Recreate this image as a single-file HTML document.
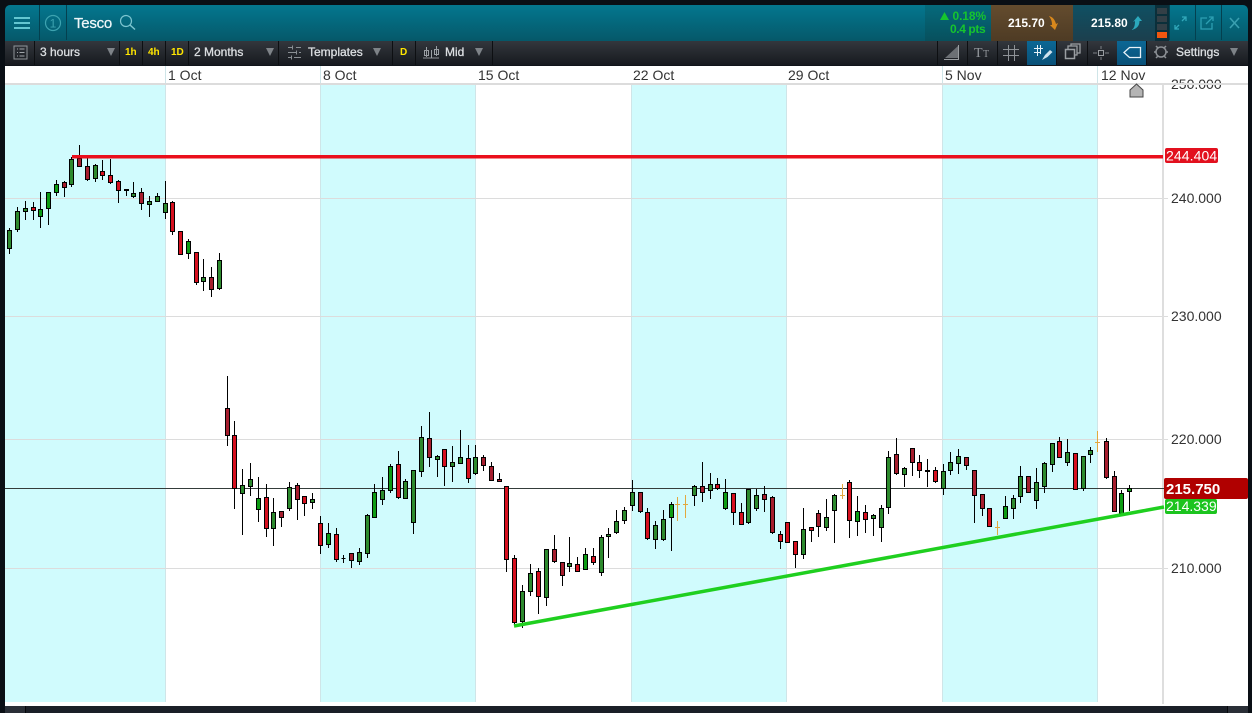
<!DOCTYPE html>
<html><head><meta charset="utf-8"><title>Tesco</title>
<style>
html,body{margin:0;padding:0;background:#0a0f15;width:1252px;height:713px;overflow:hidden}
svg{display:block;position:absolute;left:0;top:0}
text{font-family:"Liberation Sans",sans-serif}
</style></head><body>
<svg width="1252" height="713" viewBox="0 0 1252 713" xmlns="http://www.w3.org/2000/svg">
<defs>
<linearGradient id="hd" x1="0" y1="0" x2="0" y2="1"><stop offset="0" stop-color="#04778f"/><stop offset="1" stop-color="#055869"/></linearGradient>
<linearGradient id="tb" x1="0" y1="0" x2="0" y2="1"><stop offset="0" stop-color="#33373d"/><stop offset="1" stop-color="#16191e"/></linearGradient>
<linearGradient id="br" x1="0" y1="0" x2="0" y2="1"><stop offset="0" stop-color="#644c2e"/><stop offset="1" stop-color="#4e3b24"/></linearGradient>
<linearGradient id="dt" x1="0" y1="0" x2="0" y2="1"><stop offset="0" stop-color="#0f5063"/><stop offset="1" stop-color="#1c3f4d"/></linearGradient>
<linearGradient id="gc" x1="0" y1="0" x2="0" y2="1"><stop offset="0" stop-color="#056a7c"/><stop offset="1" stop-color="#07505d"/></linearGradient>
<linearGradient id="bl" x1="0" y1="0" x2="0" y2="1"><stop offset="0" stop-color="#0b6795"/><stop offset="1" stop-color="#0a5178"/></linearGradient>
</defs>
<rect width="1252" height="713" fill="#0a0f15"/>

<!-- header -->
<path d="M5 41V10a5 5 0 0 1 5-5H1243a5 5 0 0 1 5 5V41z" fill="url(#hd)"/>
<path d="M39.500 5V40M66.500 5V40" stroke="#04404f"/>
<path d="M14 18h16M14 23h16M14 28h16" stroke="#63c6d1" stroke-width="2"/>
<circle cx="53" cy="23" r="7.500" fill="none" stroke="#3da3b0" stroke-width="1.200"/>
<text x="53" y="27.500" font-size="12" fill="#3da3b0" text-anchor="middle">1</text>
<text x="74" y="28" font-size="15" fill="#eef6f8" stroke="#eef6f8" stroke-width=".25" letter-spacing="-.25">Tesco</text>
<circle cx="126" cy="21" r="5.500" fill="none" stroke="#7cc5d0" stroke-width="1.200"/>
<path d="M130 25l5 4.500" stroke="#7cc5d0" stroke-width="1.500"/>

<rect x="925" y="5" width="66" height="36" fill="url(#gc)"/>
<rect x="991" y="5" width="82" height="36" fill="url(#br)"/>
<rect x="1073" y="5" width="82" height="36" fill="url(#dt)"/>
<path d="M940 20l4.500-8 4.500 8z" fill="#16c52e"/>
<text x="952.500" y="20" font-size="12" font-weight="bold" fill="#16c52e" letter-spacing="-.1">0.18%</text>
<text x="950" y="33" font-size="12" font-weight="bold" fill="#16c52e" letter-spacing="-.4">0.4 pts</text>
<text x="1008" y="27" font-size="12" font-weight="bold" fill="#fff">215.70</text>
<path d="M1049 16c4 1 6 4 7 8l2-1-3 7-5-5 2 0c0-4-1-6-3-9z" fill="#d9881c"/>
<text x="1091" y="27" font-size="12" font-weight="bold" fill="#fff">215.80</text>
<path d="M1131 30c3-1 4-4 4-9l-2 1 5-6 4 5-2.500 0c0 4-2 8-8.500 9z" fill="#2ba9bd"/>

<rect x="1155" y="5" width="14" height="36" fill="#0b2f3a"/>
<rect x="1157" y="8" width="10" height="6" fill="#333f46"/>
<rect x="1157" y="16" width="10" height="6" fill="#333f46"/>
<rect x="1157" y="24" width="10" height="6" fill="#333f46"/>
<rect x="1157" y="32" width="10" height="6" fill="#f0560f"/>
<path d="M1195.500 5V40M1221.500 5V40" stroke="#04404f"/>
<path d="M1169.500 5V40" stroke="#04404f"/>
<g fill="none" stroke="#2c9fb2" stroke-width="1.300">
<path d="M1175 29l4-4M1175 25v4h4M1186 17l-4 4M1182 17h4v4" stroke="#31a8ba"/>
<path d="M1207 18h-6v11h11v-6" />
<path d="M1206 24l7-7M1209 17h4v4"/>
<path d="M1230 18l9 10M1239 18l-9 10" stroke="#3a9fb0" stroke-width="1.600"/>
</g>

<!-- toolbar -->
<rect x="5" y="41" width="1243" height="24.500" fill="url(#tb)"/>
<path d="M34.500 41V65M119.500 41V65M142.500 41V65M165.500 41V65M188.500 41V65M278.500 41V65M392.500 41V65M415.500 41V65M492.500 41V65M937.500 41V65M967.500 41V65M997.500 41V65M1027.500 41V65M1056.500 41V65M1087.500 41V65M1117.500 41V65M1146.500 41V65" stroke="#0d0f12"/>
<rect x="14" y="46" width="13" height="13" fill="none" stroke="#8f9499"/>
<path d="M17 49h1M17 52.500h1M17 56h1M19.500 49h5M19.500 52.500h5M19.500 56h5" stroke="#a0a5aa"/>
<g font-size="12" fill="#dcdfe2" stroke="#dcdfe2" stroke-width=".3">
<text x="40" y="56">3 hours</text>
<text x="194" y="56">2 Months</text>
<text x="308" y="56">Templates</text>
<text x="445" y="56">Mid</text>
<text x="1176" y="56">Settings</text>
</g>
<g font-size="10" font-weight="bold" fill="#ffe600">
<text x="125" y="55">1h</text>
<text x="148" y="55">4h</text>
<text x="171" y="55">1D</text>
<text x="400" y="55">D</text>
</g>
<g fill="#7e8388">
<path d="M107 48h8l-4 8zM266 48h8l-4 8zM373 48h8l-4 8zM475 48h8l-4 8zM1230 48h8l-4 8z"/>
</g>
<path d="M288 47.500h5M296 47.500h5M288 52.500h9M299 52.500h2M288 57.500h3M294 57.500h7M292.500 45.500v4M296.500 50.500v4M291.500 55.500v4" stroke="#8a8f94"/>
<path d="M423 58h16" stroke="#8a8f94"/>
<path d="M426.500 47v10M431.500 50v8M436.500 46v10" stroke="#9a9fa4"/>
<rect x="424.500" y="50.500" width="4" height="5" fill="none" stroke="#9a9fa4"/>
<rect x="434.500" y="49.500" width="4" height="5" fill="none" stroke="#9a9fa4"/>
<!-- right tools -->
<path d="M945 58L958 46V58z" fill="#6c7075"/>
<path d="M944 59.500h15M958.500 45v15" stroke="#9a9ea2"/>
<text x="974" y="57" font-size="14" fill="#93979c" style="font-family:'Liberation Serif',serif">T</text>
<text x="983" y="57" font-size="10" fill="#93979c" style="font-family:'Liberation Serif',serif">T</text>
<path d="M1003 49.500h16M1003 55.500h16M1008.500 45v16M1014.500 45v16" stroke="#8e9297"/>
<rect x="1027" y="41" width="29" height="24" fill="url(#bl)"/>
<path d="M1034 48.500h9M1034 52.500h7M1037.500 45v11M1040.500 45v9" stroke="#e6f1f7"/>
<path d="M1042 60l3-5 5-5 2.500 2-5 5z" fill="#cfe3ee"/>
<rect x="1065.500" y="49.500" width="9" height="9" fill="none" stroke="#9a9ea2" stroke-width="1.500"/>
<path d="M1068 49v-3h9v9h-2.500M1071 46v-2h9v9h-3" fill="none" stroke="#9a9ea2" stroke-width="1.300"/>
<path d="M1093 53h4M1105 53h4M1101 46v3M1101 57v3" stroke="#7d8186"/>
<rect x="1098.500" y="50.500" width="5" height="5" fill="none" stroke="#9a9ea2"/>
<rect x="1117" y="41" width="29" height="24" fill="url(#bl)"/>
<path d="M1124 52.500l5.500-5h11v10h-11z" fill="none" stroke="#e8f2f8" stroke-width="1.300"/>
<circle cx="1161" cy="52" r="5" fill="none" stroke="#8c9095" stroke-width="1.500"/>
<path d="M1156 46l2 2M1166 46l-2 2M1156 58l2-2M1166 58l-2-2M1154 52h2M1166 52h2" stroke="#8c9095" stroke-width="1.500"/>

<!-- chart area -->
<rect x="5" y="66" width="1243" height="640" fill="#fff"/>
<g fill="#d0fbfd">
<rect x="5" y="84" width="160" height="618"/>
<rect x="321" y="84" width="154" height="618"/>
<rect x="631" y="84" width="155" height="618"/>
<rect x="942" y="84" width="155" height="618"/>
</g>
<path d="M165.500 66V702M320.500 66V702M475.500 84V702M631.500 84V702M786.500 84V702M942.500 66V702M1097.500 66V702" stroke="#cfe5e8"/>
<path d="M5 198.500H1168M5 316.500H1168M5 439.500H1168M5 568.500H1168" stroke="#dcdcdc"/>
<rect x="1162" y="84" width="2" height="620" fill="#dedede"/>

<g font-size="14" fill="#333">
<text x="168" y="80">1 Oct</text>
<text x="323" y="80">8 Oct</text>
<text x="478" y="80">15 Oct</text>
<text x="633" y="80">22 Oct</text>
<text x="788" y="80">29 Oct</text>
<text x="945" y="80">5 Nov</text>
<text x="1101" y="80">12 Nov</text>
<text x="1171" y="89">250.000</text>
<text x="1171" y="203">240.000</text>
<text x="1171" y="321">230.000</text>
<text x="1171" y="444">220.000</text>
<text x="1171" y="573">210.000</text>
</g>
<path d="M5 84h1243" stroke="#dcdcdc" stroke-width="2"/>
<path d="M1136.500 84l6.500 6v7h-13v-7z" fill="#b4b4b4" stroke="#444"/>

<path d="M5 488.500H1164" stroke="#343c3a"/>

<!-- wicks -->
<path stroke="#000" fill="none" d="M9.500 228V254M17.500 207V232M25.500 201V220M33.500 202V220M40.500 192V228M48.500 192V225M56.500 180V196M64.500 181V197M71.500 157V187M79.500 145V167M87.500 157V181M95.500 164V182M102.500 160V180M110.500 159V184M118.500 180V203M126.500 189V196M133.500 182V198M141.500 188V210M149.500 196V217M157.500 193V202M165.500 181V219M172.500 201V235M180.500 231V255M188.500 239V259M196.500 252V285M203.500 259V291M211.500 267V297M219.500 253V290M227.500 376V446M234.500 421V509M242.500 469V535M250.500 463V496M258.500 477V522M266.500 484V537M273.500 498V546M281.500 511V527M289.500 482V511M297.500 483V520M304.500 496V516M312.500 493V509M320.500 516V554M328.500 523V548M336.500 528V562M343.500 555V563M351.500 553V568M359.500 548V565M367.500 514V558M374.500 484V518M382.500 477V505M390.500 464V493M398.500 451V499M405.500 479V499M413.500 470V534M421.500 426V477M429.500 412V467M437.500 455V477M444.500 449V486M452.500 446V482M460.500 430V464M468.500 445V483M475.500 445V475M483.500 455V471M491.500 462V481M499.500 473V482M506.500 486V572M514.500 555V625M522.500 585V628M530.500 564V596M538.500 568V614M546.500 549V606M554.500 535V563M562.500 562V586M569.500 537V572M577.500 557V572M585.500 548V570M593.500 548V565M601.500 535V576M608.500 528V558M616.500 510V534M624.500 507V524M632.500 480V511M640.500 492V513M647.500 508V540M655.500 521V549M663.500 510V541M671.500 502V551M694.500 485V506M702.500 462V502M710.500 473V499M717.500 478V490M725.500 479V510M733.500 493V525M741.500 503V525M748.500 489V524M756.500 489V511M764.500 486V512M772.500 496V534M780.500 531V549M787.500 522V543M795.500 541V568M803.500 508V559M811.500 527V542M818.500 510V537M826.500 499V531M834.500 494V543M849.500 480V538M857.500 496V536M865.500 505V533M873.500 514V536M881.500 505V542M888.500 451V514M896.500 438V475M904.500 467V487M912.500 448V476M919.500 455V478M927.500 459V487M935.500 467V483M943.500 464V495M950.500 452V475M958.500 449V474M966.500 457V470M974.500 470V523M982.500 494V516M989.500 508V527M1005.500 496V519M1013.500 495V519M1020.500 466V503M1028.500 476V493M1036.500 468V509M1044.500 462V493M1052.500 443V472M1059.500 437V458M1067.500 439V466M1075.500 453V490M1083.500 456V491M1090.500 447V463M1106.500 438V479M1114.500 471V512M1121.500 490V516M1129.500 485V511"/>
<!-- doji orange -->
<path stroke="#e2a83e" fill="none" d="M677.500 497V521M675 504.500H680M685.500 495V518M683 504.500H688M842.500 484V499M840 495.500H845M997.500 521V535M995 527.500H1000M1097.500 431V452M1095 442.500H1100"/>

<!-- bodies: green -->
<path stroke="#000" fill="#2d8a2e" d="M7.500 230.500h4v18h-4zM15.500 211.500h4v18h-4zM23.500 208.500h4v3h-4zM69.500 159.500h4v25h-4zM93.500 165.500h4v13h-4zM131.500 193.500h4v3h-4zM147.500 201.500h4v3h-4zM155.500 196.500h4v5h-4zM163.500 203.500h4v9h-4zM201.500 277.500h4v4h-4zM217.500 260.500h4v28h-4zM240.500 485.500h4v8h-4zM248.500 479.500h4v7h-4zM271.500 512.500h4v16h-4zM287.500 487.500h4v21h-4zM310.500 499.500h4v3h-4zM357.500 552.500h4v9h-4zM365.500 515.500h4v38h-4zM380.500 490.500h4v9h-4zM403.500 481.500h4v17h-4zM411.500 470.500h4v52h-4zM419.500 437.500h4v34h-4zM435.500 456.500h4v3h-4zM450.500 462.500h4v4h-4zM458.500 457.500h4v6h-4zM473.500 457.500h4v16h-4zM520.500 591.500h4v30h-4zM528.500 573.500h4v18h-4zM544.500 549.500h4v48h-4zM567.500 563.500h4v3h-4zM599.500 537.500h4v35h-4zM606.500 534.500h4v2h-4zM614.500 521.500h4v11h-4zM622.500 510.500h4v10h-4zM630.500 492.500h4v13h-4zM653.500 525.500h4v14h-4zM661.500 519.500h4v20h-4zM692.500 486.500h4v9h-4zM708.500 484.500h4v6h-4zM746.500 489.500h4v33h-4zM754.500 495.500h4v13h-4zM801.500 529.500h4v25h-4zM824.500 517.500h4v10h-4zM832.500 495.500h4v15h-4zM871.500 515.500h4v3h-4zM879.500 508.500h4v19h-4zM886.500 457.500h4v50h-4zM902.500 468.500h4v6h-4zM941.500 471.500h4v17h-4zM948.500 462.500h4v8h-4zM956.500 456.500h4v7h-4zM1011.500 498.500h4v10h-4zM1018.500 476.500h4v20h-4zM1034.500 482.500h4v18h-4zM1042.500 463.500h4v23h-4zM1050.500 443.500h4v21h-4zM1065.500 452.500h4v10h-4zM1081.500 456.500h4v32h-4zM1088.500 450.500h4v4h-4z"/>
<!-- bodies: bright green -->
<path stroke="#000" fill="#0d9c14" d="M38.500 209.500h4v7h-4zM46.500 192.500h4v16h-4zM54.500 184.500h4v8h-4zM186.500 241.500h4v12h-4zM256.500 498.500h4v11h-4zM326.500 533.500h4v11h-4zM372.500 492.500h4v25h-4zM388.500 466.500h4v24h-4zM583.500 554.500h4v15h-4zM669.500 504.500h4v13h-4zM723.500 492.500h4v16h-4zM855.500 511.500h4v10h-4zM1003.500 506.500h4v12h-4zM1119.500 493.500h4v20h-4zM1127.500 488.500h4v3h-4z"/>
<!-- bodies: red -->
<path stroke="#000" fill="#d6101f" d="M31.500 207.500h4v3h-4zM100.500 171.500h4v4h-4zM108.500 175.500h4v7h-4zM116.500 181.500h4v9h-4zM124.500 189.500h4v1h-4zM170.500 202.500h4v29h-4zM178.500 231.500h4v23h-4zM194.500 252.500h4v30h-4zM232.500 435.500h4v53h-4zM264.500 497.500h4v31h-4zM302.500 496.500h4v7h-4zM318.500 523.500h4v22h-4zM334.500 534.500h4v25h-4zM341.500 558.500h4v0h-4zM396.500 464.500h4v33h-4zM442.500 449.500h4v17h-4zM466.500 458.500h4v20h-4zM504.500 486.500h4v73h-4zM512.500 558.500h4v64h-4zM536.500 571.500h4v25h-4zM575.500 564.500h4v7h-4zM591.500 556.500h4v6h-4zM645.500 512.500h4v26h-4zM715.500 484.500h4v4h-4zM731.500 493.500h4v19h-4zM739.500 512.500h4v12h-4zM778.500 534.500h4v7h-4zM785.500 522.500h4v20h-4zM793.500 541.500h4v13h-4zM809.500 527.500h4v3h-4zM847.500 482.500h4v38h-4zM863.500 512.500h4v7h-4zM917.500 462.500h4v8h-4zM925.500 470.500h4v1h-4zM933.500 470.500h4v11h-4zM987.500 508.500h4v18h-4zM1057.500 441.500h4v16h-4zM1073.500 453.500h4v36h-4z"/>
<!-- bodies: dark red -->
<path stroke="#000" fill="#a61e2e" d="M62.500 182.500h4v5h-4zM77.500 158.500h4v8h-4zM85.500 166.500h4v13h-4zM139.500 192.500h4v11h-4zM209.500 277.500h4v12h-4zM225.500 408.500h4v27h-4zM279.500 511.500h4v6h-4zM295.500 485.500h4v14h-4zM349.500 553.500h4v7h-4zM427.500 438.500h4v19h-4zM481.500 457.500h4v8h-4zM489.500 466.500h4v14h-4zM497.500 479.500h4v2h-4zM552.500 549.500h4v12h-4zM560.500 562.500h4v13h-4zM638.500 492.500h4v19h-4zM700.500 486.500h4v6h-4zM762.500 494.500h4v5h-4zM770.500 497.500h4v35h-4zM816.500 513.500h4v13h-4zM894.500 454.500h4v19h-4zM910.500 448.500h4v14h-4zM964.500 457.500h4v8h-4zM972.500 470.500h4v25h-4zM980.500 494.500h4v14h-4zM1026.500 476.500h4v16h-4zM1104.500 441.500h4v36h-4zM1112.500 476.500h4v35h-4z"/>

<!-- trend lines -->
<rect x="72" y="155" width="1091" height="3.500" fill="#ea0f1c"/>
<path d="M514 626L1164 507" stroke="#1fcf1f" stroke-width="3.500" fill="none"/>

<!-- price tags -->
<rect x="1165" y="148" width="53" height="15" rx="2" fill="#e2101e"/>
<text x="1166" y="160.500" font-size="14" fill="#fff" letter-spacing=".1">244.404</text>
<rect x="1164" y="478" width="84" height="21" rx="2" fill="#b00000"/>
<text x="1166" y="494" font-size="15" font-weight="bold" fill="#fff">215.750</text>
<rect x="1165" y="499" width="52" height="15" rx="2" fill="#1cc41f"/>
<text x="1166" y="511" font-size="14" fill="#fff">214.339</text>

<!-- bottom bar -->
<rect x="0" y="706" width="1252" height="7" fill="#0a0f15"/>
<rect x="5" y="706" width="1243" height="7" fill="#1a1f27"/>
<rect x="5" y="706" width="20" height="7" fill="#2a2f37"/>
<rect x="25" y="706" width="1" height="7" fill="#05070a"/>
<rect x="1228" y="706" width="20" height="7" fill="#2a2f37"/>
<rect x="1227" y="706" width="1" height="7" fill="#05070a"/>
</svg>
</body></html>
